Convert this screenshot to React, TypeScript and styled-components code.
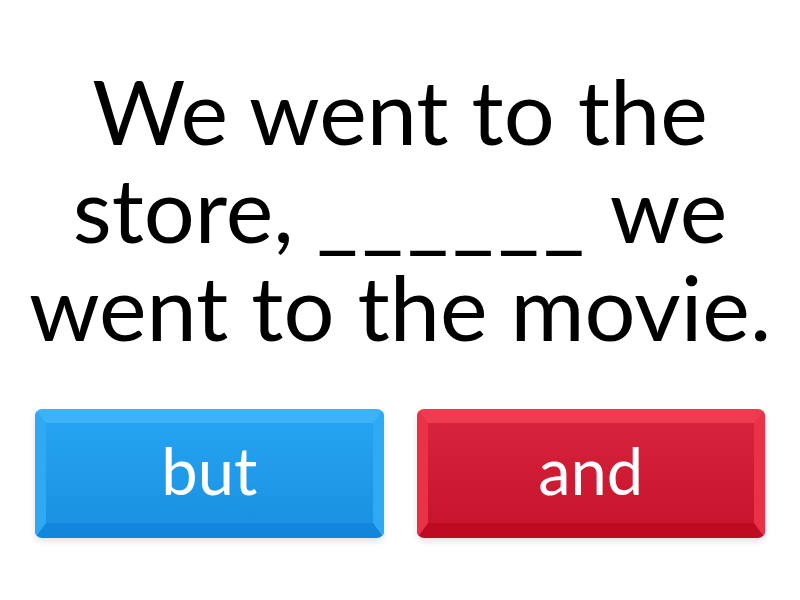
import type { FC } from 'react'
import styled, { createGlobalStyle } from 'styled-components'

const GlobalStyle = createGlobalStyle`
  html, body {
    margin: 0;
    padding: 0;
    background: #ffffff;
  }
  body {
    font-family: Lato, "Open Sans", sans-serif;
  }
`

const Page = styled.div`
  width: 800px;
  height: 600px;
  display: flex;
  flex-direction: column;
  align-items: center;
  box-sizing: border-box;
  padding: 61px 35px 0;
`

const Question = styled.h1`
  margin: 0;
  height: 348px;
  font-size: 90px;
  font-weight: 400;
  line-height: 98px;
  text-align: center;
  white-space: nowrap;
  color: #000000;
`

const Blank = styled.span`
  letter-spacing: 4px;
`

const Answers = styled.div`
  display: grid;
  grid-template-columns: 1fr 1fr;
  gap: 33px;
  width: 100%;
`

const palettes = {
  blue: {
    top: '#3cb3f7',
    side: '#2fa9f3',
    bottom: '#1286dc',
    from: '#25a3f0',
    to: '#1b92e3',
  },
  red: {
    top: '#ef3b50',
    side: '#e93248',
    bottom: '#bd0c22',
    from: '#d7233c',
    to: '#c7152d',
  },
}

type Tone = keyof typeof palettes

const AnswerButton = styled.button<{ $tone: Tone }>`
  height: 129px;
  box-sizing: border-box;
  border-style: solid;
  border-width: 14px 11px 15px 11px;
  border-color: ${(p) => palettes[p.$tone].top} ${(p) => palettes[p.$tone].side}
    ${(p) => palettes[p.$tone].bottom} ${(p) => palettes[p.$tone].side};
  border-radius: 7px;
  background: linear-gradient(
    180deg,
    ${(p) => palettes[p.$tone].from},
    ${(p) => palettes[p.$tone].to}
  );
  box-shadow: 0 3px 6px rgba(0, 0, 0, 0.12);
  color: #ffffff;
  font-family: Lato, "Open Sans", sans-serif;
  font-size: 65px;
  font-weight: 400;
  line-height: 1;
  padding: 0 0 6px;
  cursor: pointer;
`

const App: FC = () => {
  return (
    <>
      <GlobalStyle />
      <Page>
        <Question>
          We went to the
          <br />
          store, <Blank>______</Blank> we
          <br />
          went to the movie.
        </Question>
        <Answers>
          <AnswerButton $tone="blue">but</AnswerButton>
          <AnswerButton $tone="red">and</AnswerButton>
        </Answers>
      </Page>
    </>
  )
}

export default App
